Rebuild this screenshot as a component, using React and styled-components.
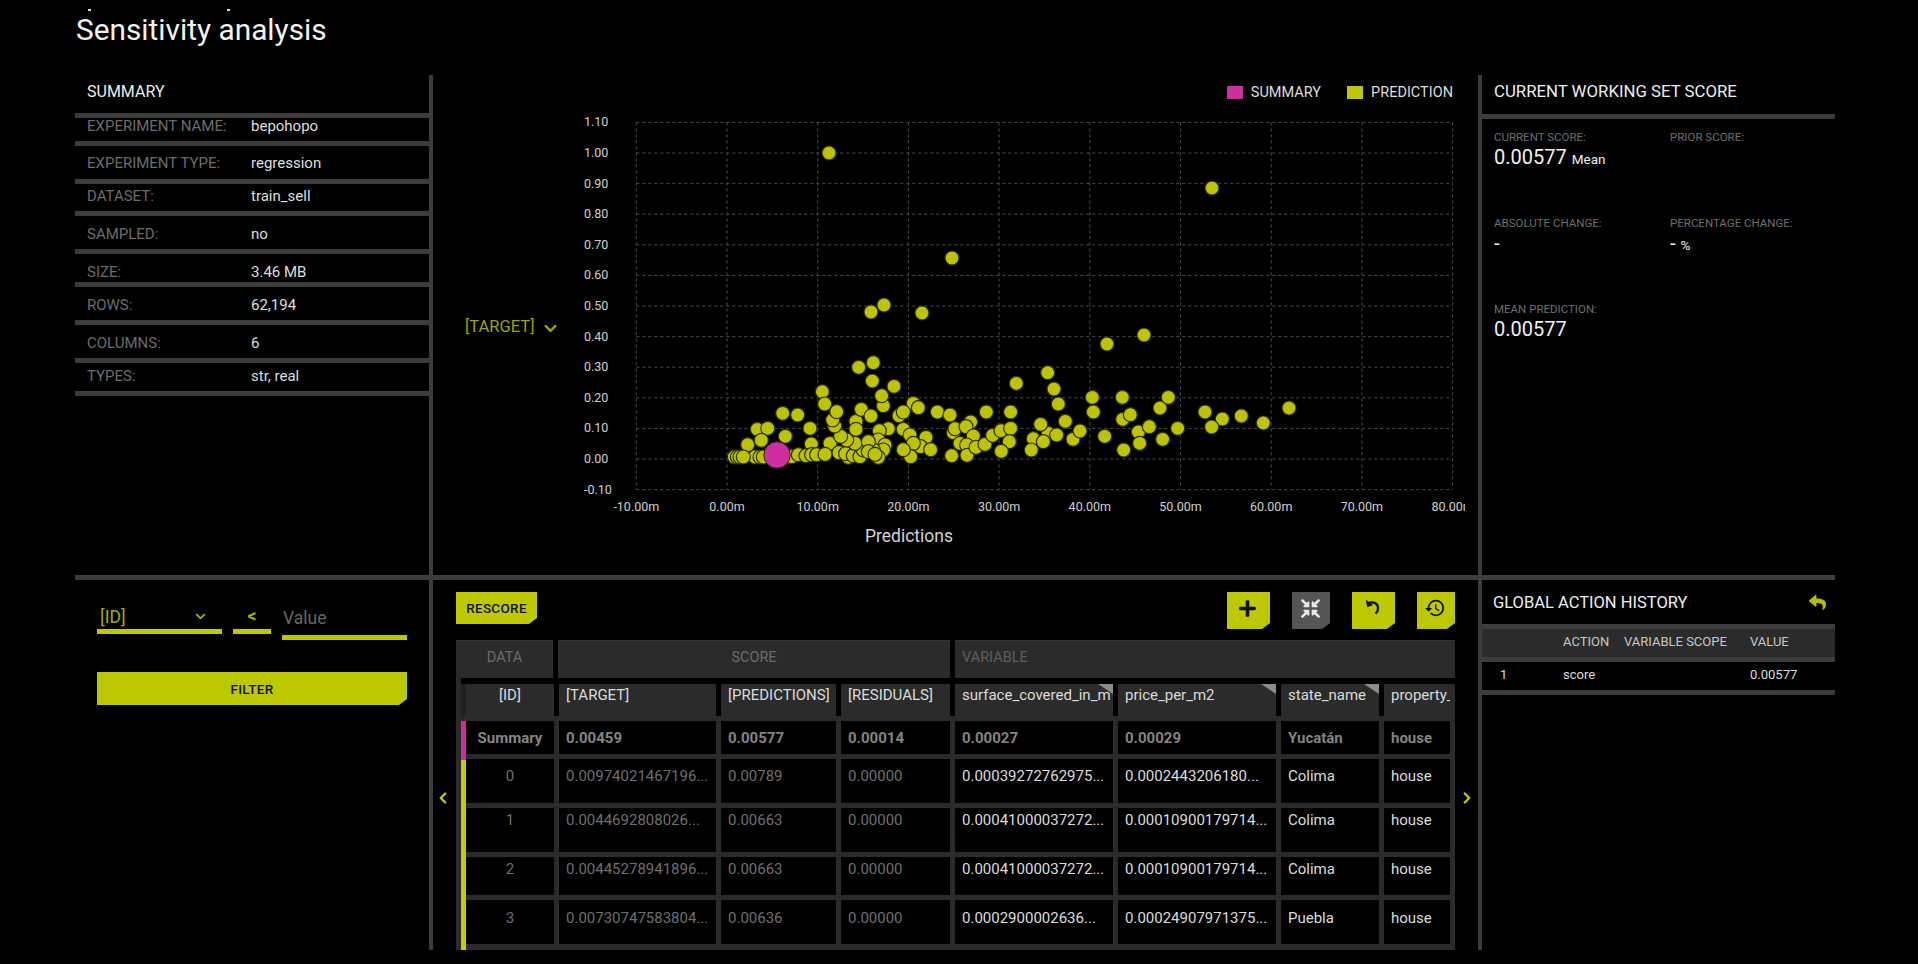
import React from 'react'
import styled, { createGlobalStyle } from 'styled-components'
import { FaPlus, FaCompressArrowsAlt, FaReply } from 'react-icons/fa'
import { MdHistory } from 'react-icons/md'
import { ChevronDown, ChevronLeft, ChevronRight } from 'lucide-react'

const OLIVE = '#bcc800'
const PINK = '#cf2f9e'
const BAR = '#3c3c3c'
const CELL = '#2b2b2b'
const FONT = `Roboto, "Liberation Sans", sans-serif`

const Global = createGlobalStyle`
  html, body { margin: 0; background: #000; }
  body { font-family: ${FONT}; color: #ddd; overflow: hidden; }
  * { box-sizing: border-box; }
`

const Page = styled.div`
  width: 1835px;
  height: 964px;
  padding-left: 75px;
  background: #000;
`
const Crumbs = styled.div`
  display: flex;
  gap: 136px;
  height: 11px;
  padding: 9px 0 0 13px;
`
const Dash = styled.span`
  width: 3px;
  height: 2px;
  background: #ddd;
`
const Title = styled.h1`
  margin: 0;
  height: 64px;
  padding-left: 1px;
  font-size: 29.8px;
  line-height: 38px;
  font-weight: 400;
  color: #f2f2f2;
`
const TopRow = styled.div`
  display: flex;
  height: 500px;
`
const BottomRow = styled.div`
  display: flex;
  height: 370px;
`
const HBar = styled.div`
  height: 5px;
  background: ${BAR};
`
const LeftPanel = styled.section`
  width: 358px;
  flex: none;
  border-right: 4px solid ${BAR};
`
const MidPanel = styled.section`
  position: relative;
  width: 1049px;
  flex: none;
  border-right: 4px solid ${BAR};
`
const RightPanel = styled.section`
  flex: 1;
`
const PanelHead = styled.div`
  display: flex;
  align-items: center;
  justify-content: space-between;
  height: ${p => p.$h}px;
  padding: 0 9px ${p => p.$lift}px ${p => p.$left}px;
  border-bottom: 5px solid ${BAR};
  font-size: ${p => p.$size}px;
  color: #eee;
`
const InfoRow = styled.div`
  display: flex;
  height: ${p => p.$h}px;
  padding: ${p => p.$top}px 0 0 12px;
  border-bottom: 5px solid ${BAR};
  font-size: 15px;
  line-height: 16px;
`
const InfoLabel = styled.span`
  width: 164px;
  color: #6c6c6c;
`
const InfoValue = styled.span`
  color: #dedede;
`

const Filters = styled.div`
  display: flex;
  gap: 11px;
  align-items: flex-start;
  padding: 22px 0 0 22px;
`
const Field = styled.div`
  display: flex;
  align-items: center;
  justify-content: space-between;
  width: ${p => p.$w}px;
  height: 32px;
  padding: 2px ${p => p.$right}px 0 3px;
  border-bottom: 5px solid ${OLIVE};
  color: #a2ac00;
  font-size: 17.5px;
`
const Lt = styled(Field)`
  justify-content: center;
  padding: 0;
  font-weight: 700;
`
const ValueInput = styled.input`
  width: 125px;
  height: 38px;
  padding: 0 0 2px 1px;
  background: none;
  border: 0;
  border-bottom: 5px solid ${OLIVE};
  outline: none;
  color: #ddd;
  font: 17.5px ${FONT};
  &::placeholder { color: #676767; opacity: 1; }
`
const Notched = styled.button`
  position: relative;
  display: ${p => (p.$block ? 'block' : 'flex')};
  align-items: center;
  justify-content: center;
  padding: 0;
  border: 0;
  background: ${p => (p.$off ? '#555' : OLIVE)};
  color: #111;
  font: 500 13.5px ${FONT};
  letter-spacing: 0.3px;
  &::after {
    content: '';
    position: absolute;
    right: 0;
    bottom: 0;
    border-style: solid;
    border-width: 0 0 6px 8px;
    border-color: transparent transparent #000 transparent;
  }
`
const FilterButton = styled(Notched)`
  width: 310px;
  height: 33px;
  margin: 32px 0 0 22px;
`
const RescoreButton = styled(Notched)`
  width: 81px;
  height: 32px;
`
const ToolButton = styled(Notched)`
  width: ${p => p.$w}px;
  height: 37px;
  padding: 0 2px 5px 0;
  color: ${p => (p.$off ? '#e8e8e8' : '#111')};
  font-size: 19px;
`
const Toolbar = styled.div`
  display: flex;
  justify-content: space-between;
  height: 48px;
  margin-top: 12px;
  padding: 0 23px;
`
const ToolGroup = styled.div`
  display: flex;
  gap: 22px;
`
const TableRow = styled.div`
  display: flex;
`
const Arrow = styled.div`
  display: flex;
  align-items: center;
  justify-content: center;
  width: 23px;
  padding: 6px ${p => p.$shift}px 0 0;
  color: ${OLIVE};
`
const Table = styled.div`
  width: 999px;
  height: 310px;
  overflow: hidden;
  background: ${CELL};
  font-size: 15px;
  line-height: 20px;
`
const GroupRow = styled.div`
  display: grid;
  grid-template-columns: 97px 392px 1fr;
  column-gap: 5px;
  height: 38px;
  background: #000;
`
const GroupCell = styled.div`
  padding-top: 7px;
  border-top: 1px solid #363636;
  background: ${CELL};
  color: ${p => (p.$var ? '#5e5e5e' : '#6c6c6c')};
  text-align: ${p => (p.$var ? 'left' : 'center')};
  padding-left: ${p => (p.$var ? '7px' : '0')};
  font-size: 14.5px;
`
const Spacer = styled.div`
  height: 6px;
  margin-left: 5px;
  background: #000;
`
const Cols = styled.div`
  display: grid;
  grid-template-columns: 88px 157px 115px 109px 158px 158px 98px 66px;
  column-gap: 5px;
`
const HeadRow = styled(Cols)`
  height: 32px;
  margin: 0 5px;
  padding-left: 5px;
  background: #000;
  box-shadow: inset 5px 0 0 #202020;
`
const HeadCell = styled.div`
  position: relative;
  overflow: hidden;
  padding: 1px 0 0 ${p => (p.$center ? 0 : 7)}px;
  text-align: ${p => (p.$center ? 'center' : 'left')};
  background: ${CELL};
  color: #dcdcdc;
  white-space: nowrap;
  &::after {
    content: '';
    display: ${p => (p.$flag ? 'block' : 'none')};
    position: absolute;
    top: 0;
    right: 0;
    border-style: solid;
    border-width: 0 15px 10px 0;
    border-color: transparent #8c8c8c transparent transparent;
  }
`
const Body = styled.div`
  display: flex;
  margin: 5px 0 0 5px;
`
const Strip = styled.div`
  display: flex;
  flex-direction: column;
  width: 5px;
  height: 229px;
`
const StripPart = styled.div`
  flex: ${p => p.$grow};
  flex-basis: ${p => p.$h}px;
  background: ${p => p.$c};
`
const Rows = styled.div`
  display: flex;
  flex-direction: column;
  gap: 5px;
`
const DataCell = styled.div`
  height: ${p => p.$h}px;
  padding: ${p => p.$top}px 0 0 ${p => (p.$center ? 0 : 7)}px;
  text-align: ${p => (p.$center ? 'center' : 'left')};
  background: #000;
  color: ${p => (p.$bold ? '#848484' : p.$light ? '#dcdcdc' : '#6f6f6f')};
  font-weight: ${p => (p.$bold ? 700 : 400)};
  white-space: nowrap;
  overflow: hidden;
`

const ScoreGrid = styled.div`
  display: grid;
  grid-template-columns: 176px 1fr;
  grid-auto-rows: 86px;
  padding: 11px 0 0 12px;
`
const ScoreLabel = styled.div`
  font-size: 11.5px;
  line-height: 14px;
  color: #6e6e6e;
`
const ScoreValue = styled.div`
  font-size: 20px;
  line-height: 26px;
  color: #f0f0f0;
`
const Unit = styled.span`
  margin-left: 5px;
  font-size: 13.5px;
`
const HistHead = styled.div`
  display: grid;
  grid-template-columns: 81px 61px 126px 1fr;
  align-items: center;
  height: 33px;
  padding-bottom: 3px;
  background: ${CELL};
  border-bottom: 5px solid ${BAR};
  color: #c8c8c8;
  font-size: 13px;
`
const HistRow = styled(HistHead)`
  height: 33px;
  padding-bottom: 4px;
  background: none;
  color: #dcdcdc;
`
const HistNum = styled.span`
  padding-left: 18px;
`

const Legend = styled.div`
  position: absolute;
  top: 9px;
  right: 25px;
  display: flex;
  align-items: center;
  font-size: 14.5px;
  color: #dedede;
`
const Swatch = styled.i`
  width: 16px;
  height: 13px;
  margin: 0 8px 0 ${p => p.$ml}px;
  background: ${p => p.$c};
`
const AxisPick = styled.div`
  position: absolute;
  top: 240px;
  left: 32px;
  display: flex;
  align-items: center;
  gap: 6px;
  font-size: 16.5px;
  color: #9aa400;
`
const PickChevron = styled(ChevronDown)`
  margin-top: 4px;
`
const ChartSvg = styled.svg`
  display: block;
  font-family: ${FONT};
`

// positions read off the chart, in page pixels
const crop = (list, ox, oy) => list.map(([x, y]) => [ox + x / 3, oy + y / 3])
const points = [
  [829, 153], [1212, 188], [952, 258], [871, 312], [884, 305], [922, 313], [1107, 344], [1144, 335],
  ...crop([
    [103, 291], [112, 291], [120, 291], [165, 291], [180, 291], [190, 291], [265, 291], [275, 290],
    [143, 254], [172, 208], [203, 205], [184, 241], [130, 291], [248, 160], [293, 165], [330, 205], [256, 229],
    [334, 252], [295, 284], [318, 287], [335, 284], [350, 284], [390, 250], [375, 283], [445, 292], [417, 278], [437, 281],
    [460, 287], [480, 290], [490, 270], [465, 250], [440, 240], [422, 229], [404, 198], [398, 180], [410, 155],
    [367, 95], [374, 132], [468, 184], [468, 208], [484, 148], [513, 168], [476, 22], [520, 8], [517, 63], [582, 79],
    [550, 137], [545, 107], [565, 206], [538, 212], [535, 240], [555, 255], [550, 270], [520, 270], [505, 245], [505, 275],
    [535, 292], [525, 283], [640, 130], [655, 143], [597, 167], [610, 156], [610, 208], [630, 225], [678, 232], [662, 260],
    [640, 250], [632, 290], [610, 269], [692, 269], [712, 156], [750, 165], [859, 156], [932, 156], [949, 70], [812, 186],
    [760, 218], [765, 206], [798, 200], [820, 228], [780, 250], [800, 255], [755, 287], [801, 286], [828, 262], [855, 253],
    [878, 226], [903, 212], [932, 205], [928, 245], [904, 274], [1045, 220], [1000, 236], [994, 270], [1030, 245], [1022, 193],
    [1070, 225], [1119, 238], [1140, 213], [1096, 184], [1075, 132], [1062, 87], [1043, 38], [1177, 112], [1180, 156],
  ], 700, 360),
  ...crop([
    [134, 229], [187, 112], [188, 178], [211, 164], [300, 144], [325, 112], [235, 216], [268, 200], [239, 250], [191, 270],
    [308, 238], [353, 205], [435, 156], [487, 177], [455, 201], [544, 168], [610, 189], [687, 144],
  ], 1060, 360),
]

const xTicks = [-10, 0, 10, 20, 30, 40, 50, 60, 70, 80]
const yTicks = [1.1, 1, 0.9, 0.8, 0.7, 0.6, 0.5, 0.4, 0.3, 0.2, 0.1, 0, -0.1]
const xPos = v => 727 + v * 9.07
const yPos = v => 459 - v * 306

const ScatterChart = () => (
  <ChartSvg width="1045" height="500" viewBox="433 75 1045 500">
    <defs>
      <clipPath id="plot-clip"><rect x="433" y="75" width="1032" height="500" /></clipPath>
    </defs>
    {yTicks.map(v => (
      <g key={v}>
        <line x1={xPos(-10)} x2={xPos(80)} y1={yPos(v)} y2={yPos(v)} stroke="#4c4c4c" strokeDasharray="3 3" />
        <text x="584" y={yPos(v) + 4} fontSize="12.5" fill="#d0d0d0">{v.toFixed(2)}</text>
      </g>
    ))}
    <g clipPath="url(#plot-clip)">
      {xTicks.map(v => (
        <g key={v}>
          <line x1={xPos(v)} x2={xPos(v)} y1={yPos(1.1)} y2={yPos(-0.1)} stroke="#4c4c4c" strokeDasharray="3 3" />
          <text x={xPos(v)} y="511" fontSize="12.5" fill="#d0d0d0" textAnchor="middle">{v.toFixed(2)}m</text>
        </g>
      ))}
    </g>
    {points.map(([x, y], i) => (
      <circle key={i} cx={x} cy={y} r="7" fill="#bcc400" stroke="#2e300a" strokeWidth="1.2" />
    ))}
    <circle cx="777" cy="455" r="13.2" fill={PINK} stroke="#2a2a2a" strokeWidth="1" />
    <text x="909" y="542" fontSize="17.5" fill="#d4d4d4" textAnchor="middle">Predictions</text>
  </ChartSvg>
)

const summary = [
  ['EXPERIMENT NAME:', 'bepohopo', 28, 0],
  ['EXPERIMENT TYPE:', 'regression', 38, 9],
  ['DATASET:', 'train_sell', 32, 4],
  ['SAMPLED:', 'no', 38, 10],
  ['SIZE:', '3.46 MB', 33, 10],
  ['ROWS:', '62,194', 38, 10],
  ['COLUMNS:', '6', 38, 10],
  ['TYPES:', 'str, real', 33, 5],
]

const columns = [
  { name: '[ID]', center: true },
  { name: '[TARGET]' },
  { name: '[PREDICTIONS]' },
  { name: '[RESIDUALS]' },
  { name: 'surface_covered_in_m', flag: true },
  { name: 'price_per_m2', flag: true },
  { name: 'state_name', flag: true },
  { name: 'property_type' },
]

const rows = [
  { h: 33, top: 7, bold: true, cells: ['Summary', '0.00459', '0.00577', '0.00014', '0.00027', '0.00029', 'Yucatán', 'house'] },
  { h: 44, top: 7, cells: ['0', '0.00974021467196...', '0.00789', '0.00000', '0.00039272762975...', '0.0002443206180...', 'Colima', 'house'] },
  { h: 44, top: 2, cells: ['1', '0.0044692808026...', '0.00663', '0.00000', '0.00041000037272...', '0.00010900179714...', 'Colima', 'house'] },
  { h: 38, top: 2, cells: ['2', '0.00445278941896...', '0.00663', '0.00000', '0.00041000037272...', '0.00010900179714...', 'Colima', 'house'] },
  { h: 44, top: 8, cells: ['3', '0.00730747583804...', '0.00636', '0.00000', '0.0002900002636...', '0.00024907971375...', 'Puebla', 'house'] },
]

const UndoIcon = () => (
  <svg width="20" height="20" viewBox="0 0 20 20" fill="none" stroke="#111" strokeWidth="2.2">
    <path d="M5.5 5.5c4-2.6 9.6-.6 9.6 4.6 0 2.4-1 4.2-2.6 5.6" />
    <path d="M3.4 2.6 4.6 8.6 9.4 6.8Z" fill="#111" strokeWidth="1" />
  </svg>
)

const App = () => (
  <Page>
    <Global />
    <Crumbs><Dash /><Dash /></Crumbs>
    <Title>Sensitivity analysis</Title>
    <TopRow>
      <LeftPanel>
        <PanelHead $h={43} $left={12} $size={16} $lift={6}>SUMMARY</PanelHead>
        {summary.map(([label, value, h, top]) => (
          <InfoRow key={label} $h={h} $top={top}>
            <InfoLabel>{label}</InfoLabel>
            <InfoValue>{value}</InfoValue>
          </InfoRow>
        ))}
      </LeftPanel>
      <MidPanel>
        <ScatterChart />
        <Legend>
          <Swatch $c={PINK} $ml={0} />SUMMARY
          <Swatch $c={OLIVE} $ml={26} />PREDICTION
        </Legend>
        <AxisPick>[TARGET]<PickChevron size={19} strokeWidth={3} /></AxisPick>
      </MidPanel>
      <RightPanel>
        <PanelHead $h={44} $left={12} $size={16.8} $lift={7}>CURRENT WORKING SET SCORE</PanelHead>
        <ScoreGrid>
          <div><ScoreLabel>CURRENT SCORE:</ScoreLabel><ScoreValue>0.00577<Unit>Mean</Unit></ScoreValue></div>
          <div><ScoreLabel>PRIOR SCORE:</ScoreLabel></div>
          <div><ScoreLabel>ABSOLUTE CHANGE:</ScoreLabel><ScoreValue>-</ScoreValue></div>
          <div><ScoreLabel>PERCENTAGE CHANGE:</ScoreLabel><ScoreValue>-<Unit>%</Unit></ScoreValue></div>
          <div><ScoreLabel>MEAN PREDICTION:</ScoreLabel><ScoreValue>0.00577</ScoreValue></div>
        </ScoreGrid>
      </RightPanel>
    </TopRow>
    <HBar />
    <BottomRow>
      <LeftPanel>
        <Filters>
          <Field $w={125} $right={14}>[ID]<ChevronDown size={15} strokeWidth={3} /></Field>
          <Lt $w={38} $right={0}>&lt;</Lt>
          <ValueInput placeholder="Value" />
        </Filters>
        <FilterButton $block>FILTER</FilterButton>
      </LeftPanel>
      <MidPanel>
        <Toolbar>
          <RescoreButton>RESCORE</RescoreButton>
          <ToolGroup>
            <ToolButton $w={43}><FaPlus /></ToolButton>
            <ToolButton $w={38} $off><FaCompressArrowsAlt /></ToolButton>
            <ToolButton $w={43}><UndoIcon /></ToolButton>
            <ToolButton $w={38}><MdHistory size={22} /></ToolButton>
          </ToolGroup>
        </Toolbar>
        <TableRow>
          <Arrow $shift={3}><ChevronLeft size={18} strokeWidth={3.2} /></Arrow>
          <Table>
            <GroupRow>
              <GroupCell>DATA</GroupCell>
              <GroupCell>SCORE</GroupCell>
              <GroupCell $var>VARIABLE</GroupCell>
            </GroupRow>
            <Spacer />
            <HeadRow>
              {columns.map(col => (
                <HeadCell key={col.name} $center={col.center} $flag={col.flag}>{col.name}</HeadCell>
              ))}
            </HeadRow>
            <Body>
              <Strip>
                <StripPart $c={PINK} $h={39} $grow={0} />
                <StripPart $c="#c3cc00" $h={0} $grow={1} />
              </Strip>
              <Rows>
                {rows.map(row => (
                  <Cols key={row.cells[0]}>
                    {row.cells.map((text, i) => (
                      <DataCell
                        key={i}
                        $h={row.h}
                        $top={row.top}
                        $center={i === 0}
                        $bold={row.bold}
                        $light={i > 3}
                      >
                        {text}
                      </DataCell>
                    ))}
                  </Cols>
                ))}
              </Rows>
            </Body>
          </Table>
          <Arrow $shift={0}><ChevronRight size={18} strokeWidth={3.2} /></Arrow>
        </TableRow>
      </MidPanel>
      <RightPanel>
        <PanelHead $h={49} $left={11} $size={16.5} $lift={0}>
          GLOBAL ACTION HISTORY
          <FaReply color="#b4be00" size={17} />
        </PanelHead>
        <HistHead>
          <span />
          <span>ACTION</span>
          <span>VARIABLE SCOPE</span>
          <span>VALUE</span>
        </HistHead>
        <HistRow>
          <HistNum>1</HistNum>
          <span>score</span>
          <span />
          <span>0.00577</span>
        </HistRow>
      </RightPanel>
    </BottomRow>
  </Page>
)

export default App
